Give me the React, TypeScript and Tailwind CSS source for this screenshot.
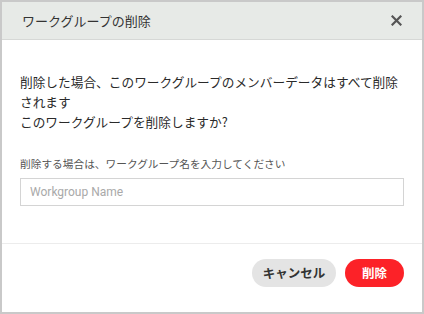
import React from "react";

export default function App() {
  const font = { fontFamily: '"Noto Sans CJK JP", "Noto Sans", sans-serif' };
  return (
    <div
      className="w-[424px] h-[314px] border-2 border-[#c9c9c9] bg-white flex flex-col text-[#333]"
      style={font}
    >
      <div className="h-[38px] shrink-0 bg-[#e7eae7] border-b border-[#d6d8d6] flex items-center justify-between pl-[20px] pr-[18px]">
        <span className="text-[13px] text-[#333]">ワークグループの削除</span>
        <svg width="11" height="11" viewBox="0 0 11 11" className="mr-[2px]">
          <path d="M1.5 1.5 L9.5 9.5 M9.5 1.5 L1.5 9.5" stroke="#555" strokeWidth="2.2" strokeLinecap="square" />
        </svg>
      </div>
      <div className="flex-1 flex flex-col px-[18px] pt-[32px]">
        <p className="text-[12.7px] leading-[20px] text-[#2a2a2a] whitespace-nowrap">
          削除した場合、このワークグループのメンバーデータはすべて削除
          <br />
          されます
        </p>
        <p className="text-[12.7px] leading-[20px] text-[#2a2a2a] whitespace-nowrap">このワークグループを削除しますか?</p>
        <p className="mt-[24px] text-[10.7px] leading-[16px] text-[#555] whitespace-nowrap">
          削除する場合は、ワークグループ名を入力してください
        </p>
        <input
          className="mt-[6px] h-[28px] w-full border border-[#d4d4d4] px-[9px] text-[12px] outline-none placeholder:text-[#a9a9a9]"
          style={{ fontFamily: 'Roboto, "Noto Sans CJK JP", sans-serif' }}
          placeholder="Workgroup Name"
        />
      </div>
      <div className="h-[69px] shrink-0 border-t border-[#ececec] flex items-start justify-end gap-[9px] pt-[15px] pr-[18px]">
        <button className="h-[28px] w-[84px] rounded-full bg-[#e4e4e4] text-[12.5px] font-bold text-[#333]">
          キャンセル
        </button>
        <button className="h-[28px] w-[59px] rounded-full bg-[#fc2228] text-[12.5px] font-bold text-white">
          削除
        </button>
      </div>
    </div>
  );
}
